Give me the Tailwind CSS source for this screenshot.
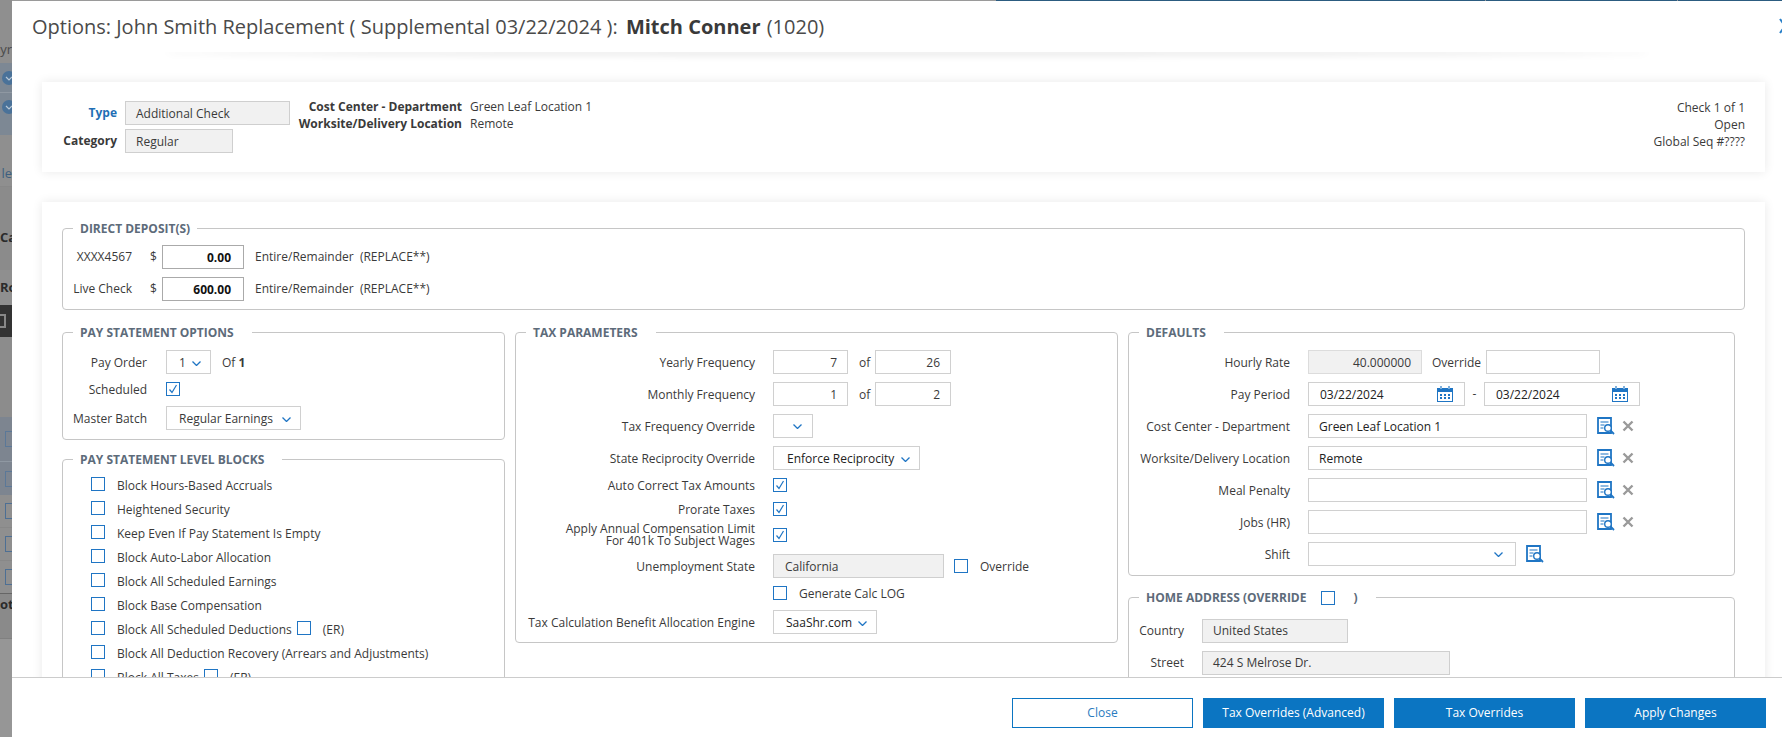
<!DOCTYPE html>
<html lang="en">
<head>
    <meta charset="UTF-8">
    <title>Options: Mitch Conner</title>
    <script src="https://cdn.jsdelivr.net/npm/@tailwindcss/browser@4"></script>
</head>
<body class="h-[737px] w-[1782px] overflow-hidden flex bg-[#8f8f8f] font-['Open_Sans','Noto_Sans',sans-serif] text-xs text-[#3a3a3a]">

<!-- Page behind the modal, only a sliver shows -->
<div class="w-[12px] h-full shrink-0 flex flex-col overflow-hidden text-[#2b2b2b]">
    <div class="h-[63px] shrink-0 bg-[#8f8f8f] flex flex-col justify-end items-end pb-[5px] text-[13px] leading-[18px] whitespace-nowrap"><span class="text-[#4a4a4a]">yr</span></div>
    <div class="h-[30px] shrink-0 bg-[#7d8894] border-b border-[#8f98a2] flex items-center"><span class="ml-[2px] w-[14px] h-[14px] shrink-0 rounded-full bg-[#4a7299] flex items-center justify-center"><svg class="w-2 h-2" viewBox="0 0 8 8"><path d="M1 3l3 3 3-3" stroke="#b9c8d6" stroke-width="1.2" fill="none"/></svg></span></div>
    <div class="h-[42px] shrink-0 bg-[#7d8894] flex items-start pt-[7px]"><span class="ml-[2px] w-[14px] h-[14px] shrink-0 rounded-full bg-[#4a7299] flex items-center justify-center"><svg class="w-2 h-2" viewBox="0 0 8 8"><path d="M1 3l3 3 3-3" stroke="#b9c8d6" stroke-width="1.2" fill="none"/></svg></span></div>
    <div class="h-[52px] shrink-0 bg-[#8f8f8f] border-b border-[#888] flex items-end justify-end pb-[4px] text-[13px] text-[#3d5f80]">le</div>
    <div class="h-[83px] shrink-0 bg-[#8b8b8b] flex items-end justify-start pb-[24px] text-[13px] font-bold overflow-hidden">Ca</div>
    <div class="h-[35px] shrink-0 bg-[#8f8f8f] flex items-center text-[13px] font-bold overflow-hidden">Ro</div>
    <div class="h-[32px] shrink-0 bg-[#333] flex items-center"><span class="-ml-[6px] w-[12px] h-[14px] shrink-0 border-2 border-[#888]"></span></div>
    <div class="h-[80px] shrink-0 bg-[#8c8c8c]"></div>
    <div class="h-[45px] shrink-0 bg-[#7d8590] border-b border-[#8f98a2] flex items-center"><span class="ml-[5px] w-[12px] h-[16px] shrink-0 border border-[#5b7898]"></span></div>
    <div class="h-[33px] shrink-0 bg-[#7d8590] flex items-center"><span class="ml-[5px] w-[12px] h-[16px] shrink-0 border border-[#5b7898]"></span></div>
    <div class="h-[33px] shrink-0 bg-[#8f8f8f] border-b border-[#888] flex items-center"><span class="ml-[5px] w-[12px] h-[16px] shrink-0 border border-[#4d6f94]"></span></div>
    <div class="h-[33px] shrink-0 bg-[#8f8f8f] border-b border-[#888] flex items-center"><span class="ml-[5px] w-[12px] h-[16px] shrink-0 border border-[#4d6f94]"></span></div>
    <div class="h-[33px] shrink-0 bg-[#8f8f8f] border-b border-[#666] flex items-center"><span class="ml-[5px] w-[12px] h-[16px] shrink-0 border border-[#4d6f94]"></span></div>
    <div class="h-[45px] shrink-0 bg-[#8a8a8a] border-b border-[#808080] text-[13px] font-bold leading-[18px] pt-[1px]">ot</div>
    <div class="flex-1 bg-[#969696]"></div>
</div>

<!-- Modal -->
<div class="relative flex-1 h-full flex flex-col overflow-hidden bg-white">
    <div class="h-px shrink-0 flex bg-[#2c5c80]">
        <div class="w-[984px] bg-[#9a9a9a]"></div>
        <div class="ml-[489px] w-px bg-[#999]"></div>
        <div class="ml-[191px] w-px bg-[#999]"></div>
    </div>

    <!-- Header -->
    <div class="relative h-[51px] shrink-0 flex items-center pl-[20px] pt-[2px] text-[20px] text-[#4a4a4a] whitespace-nowrap">
        <span>Options: John Smith Replacement ( Supplemental 03/22/2024 ):&nbsp;</span><span class="ml-[3px] font-bold text-[#3a3a3a]">Mitch Conner</span><span class="ml-[1px]">&nbsp;(1020)</span>
        <svg class="absolute right-[-9px] top-[17px] w-[12px] h-[16px]" viewBox="0 0 12 16"><path d="M1 1l10 14M11 1L1 15" stroke="#2a80c8" stroke-width="2" fill="none"/></svg>
    </div>

    <!-- Body -->
    <div class="relative flex-1 min-h-0 overflow-hidden pl-[30px] pr-[17px] pt-[30px]">
        <div class="absolute left-[150px] right-[130px] top-[-8px] h-[8px] rounded-[50%] shadow-[0_5px_7px_-2px_rgba(0,0,0,0.13)]"></div>

        <!-- Check summary -->
        <div class="h-[90px] flex justify-between bg-white shadow-[0_0_10px_rgba(0,0,0,0.09)] pt-[17px] pr-[20px]">
            <div class="flex">
                <div class="pt-[2px]">
                    <div class="flex items-center h-6 gap-[8px]">
                        <span class="w-[75px] text-right font-bold text-[#1f6fb5]">Type</span>
                        <div class="w-[165px] h-6 flex items-center pl-[10px] pt-[2px] bg-[#f1f1f1] border border-[#cfcfcf]">Additional Check</div>
                    </div>
                    <div class="flex items-center h-6 gap-[8px] mt-[4px]">
                        <span class="w-[75px] text-right font-bold">Category</span>
                        <div class="w-[108px] h-6 flex items-center pl-[10px] pt-[2px] bg-[#f1f1f1] border border-[#cfcfcf]">Regular</div>
                    </div>
                </div>
                <div class="ml-[-1px] -mt-[1px] leading-[17px]">
                    <div class="flex"><span class="w-[173px] text-right font-bold">Cost Center - Department</span><span class="ml-[8px]">Green Leaf Location 1</span></div>
                    <div class="flex"><span class="w-[173px] text-right font-bold">Worksite/Delivery Location</span><span class="ml-[8px]">Remote</span></div>
                </div>
            </div>
            <div class="text-right leading-[17px]">
                <div>Check 1 of 1</div>
                <div>Open</div>
                <div>Global Seq #????</div>
            </div>
        </div>

        <!-- Main card -->
        <div class="mt-[30px] h-[600px] bg-white shadow-[0_0_10px_rgba(0,0,0,0.09)] pt-[18px] pl-[20px] pr-[20px]">

            <fieldset class="border border-[#c6c6c6] rounded pt-[9px] pb-[8px] px-0">
                <legend class="ml-[10px] pl-[7px] pr-[7px] h-4 leading-[18px] font-bold text-[#5d6b7a]">DIRECT DEPOSIT(S)</legend>
                <div class="flex items-center h-6">
                    <span class="w-[69px] text-right">XXXX4567</span><span class="ml-[18px] w-[12px]">$</span>
                    <div class="w-[82px] h-6 flex items-center justify-end pr-[12px] pt-[2px] border border-[#aaa] font-bold text-[#111]">0.00</div>
                    <span class="ml-[11px]">Entire/Remainder &nbsp;(REPLACE**)</span>
                </div>
                <div class="flex items-center h-6 mt-2">
                    <span class="w-[69px] text-right">Live Check</span><span class="ml-[18px] w-[12px]">$</span>
                    <div class="w-[82px] h-6 flex items-center justify-end pr-[12px] pt-[2px] border border-[#aaa] font-bold text-[#111]">600.00</div>
                    <span class="ml-[11px]">Entire/Remainder &nbsp;(REPLACE**)</span>
                </div>
            </fieldset>

            <div class="grid grid-cols-[443px_603px_607px] gap-x-[10px] mt-[14px] items-start">

                <!-- Left column -->
                <div>
                    <fieldset class="border border-[#c6c6c6] rounded pt-[10px] pb-[9px] px-0">
                        <legend class="ml-[10px] pl-[7px] pr-[18px] h-4 leading-[18px] font-bold text-[#5d6b7a]">PAY STATEMENT OPTIONS</legend>
                        <div class="flex items-center h-6">
                            <span class="w-[84px] text-right pt-[2px]">Pay Order</span>
                            <div class="ml-[19px] w-[45px] h-6 flex items-center justify-between pl-[12px] pr-[9px] pt-[2px] border border-[#d0d0d0]">1
                                <svg class="w-[9px] h-[5px]" viewBox="0 0 9 5"><path d="M.5.5l4 4 4-4" stroke="#1f75c4" stroke-width="1.3" fill="none"/></svg>
                            </div>
                            <span class="ml-[11px] pt-[2px]">Of <b>1</b></span>
                        </div>
                        <div class="flex items-center h-6 mt-[3px]">
                            <span class="w-[84px] text-right pt-[2px]">Scheduled</span>
                            <span class="ml-[19px] w-[14px] h-[14px] border border-[#1f75c4] flex items-center justify-center"><svg class="w-[10px] h-[10px]" viewBox="0 0 10 10"><path d="M1.5 5.5l2.5 3L8.5 1" stroke="#1f75c4" stroke-width="1.2" fill="none"/></svg></span>
                        </div>
                        <div class="flex items-center h-6 mt-[5px]">
                            <span class="w-[84px] text-right pt-[2px]">Master Batch</span>
                            <div class="ml-[19px] w-[135px] h-6 flex items-center justify-between pl-[12px] pr-[9px] pt-[2px] border border-[#d0d0d0]">Regular Earnings
                                <svg class="w-[9px] h-[5px]" viewBox="0 0 9 5"><path d="M.5.5l4 4 4-4" stroke="#1f75c4" stroke-width="1.3" fill="none"/></svg>
                            </div>
                        </div>
                    </fieldset>

                    <fieldset class="border border-[#c6c6c6] rounded mt-[11px] pt-[10px] pl-[28px] h-[400px]">
                        <legend class="-ml-[18px] pl-[7px] pr-[18px] h-4 leading-[18px] font-bold text-[#5d6b7a]">PAY STATEMENT LEVEL BLOCKS</legend>
                        <div class="flex h-6"><span class="w-[14px] h-[14px] border border-[#1f75c4]"></span><span class="ml-[12px] leading-[17px]">Block Hours-Based Accruals</span></div>
                        <div class="flex h-6"><span class="w-[14px] h-[14px] border border-[#1f75c4]"></span><span class="ml-[12px] leading-[17px]">Heightened Security</span></div>
                        <div class="flex h-6"><span class="w-[14px] h-[14px] border border-[#1f75c4]"></span><span class="ml-[12px] leading-[17px]">Keep Even If Pay Statement Is Empty</span></div>
                        <div class="flex h-6"><span class="w-[14px] h-[14px] border border-[#1f75c4]"></span><span class="ml-[12px] leading-[17px]">Block Auto-Labor Allocation</span></div>
                        <div class="flex h-6"><span class="w-[14px] h-[14px] border border-[#1f75c4]"></span><span class="ml-[12px] leading-[17px]">Block All Scheduled Earnings</span></div>
                        <div class="flex h-6"><span class="w-[14px] h-[14px] border border-[#1f75c4]"></span><span class="ml-[12px] leading-[17px]">Block Base Compensation</span></div>
                        <div class="flex h-6"><span class="w-[14px] h-[14px] border border-[#1f75c4]"></span><span class="ml-[12px] leading-[17px]">Block All Scheduled Deductions</span><span class="ml-[5px] w-[14px] h-[14px] border border-[#1f75c4]"></span><span class="ml-[12px] leading-[17px]">(ER)</span></div>
                        <div class="flex h-6"><span class="w-[14px] h-[14px] border border-[#1f75c4]"></span><span class="ml-[12px] leading-[17px]">Block All Deduction Recovery (Arrears and Adjustments)</span></div>
                        <div class="flex h-6"><span class="w-[14px] h-[14px] border border-[#1f75c4]"></span><span class="ml-[12px] leading-[17px]">Block All Taxes</span><span class="ml-[5px] w-[14px] h-[14px] border border-[#1f75c4]"></span><span class="ml-[12px] leading-[17px]">(ER)</span></div>
                    </fieldset>
                </div>

                <!-- Tax parameters -->
                <fieldset class="border border-[#c6c6c6] rounded pt-[10px] pb-[8px] px-0">
                    <legend class="ml-[10px] pl-[7px] pr-[18px] h-4 leading-[18px] font-bold text-[#5d6b7a]">TAX PARAMETERS</legend>
                    <div class="flex items-center h-6">
                        <span class="w-[239px] text-right pt-[2px]">Yearly Frequency</span>
                        <div class="ml-[18px] w-[75px] h-6 flex items-center justify-end pr-[10px] pt-[2px] border border-[#d0d0d0]">7</div>
                        <span class="w-[27px] pl-[11px] pt-[2px]">of</span>
                        <div class="w-[76px] h-6 flex items-center justify-end pr-[10px] pt-[2px] border border-[#d0d0d0]">26</div>
                    </div>
                    <div class="flex items-center h-6 mt-2">
                        <span class="w-[239px] text-right pt-[2px]">Monthly Frequency</span>
                        <div class="ml-[18px] w-[75px] h-6 flex items-center justify-end pr-[10px] pt-[2px] border border-[#d0d0d0]">1</div>
                        <span class="w-[27px] pl-[11px] pt-[2px]">of</span>
                        <div class="w-[76px] h-6 flex items-center justify-end pr-[10px] pt-[2px] border border-[#d0d0d0]">2</div>
                    </div>
                    <div class="flex items-center h-6 mt-2">
                        <span class="w-[239px] text-right pt-[2px]">Tax Frequency Override</span>
                        <div class="ml-[18px] w-[40px] h-6 flex items-center justify-end pr-[10px] border border-[#d0d0d0]">
                            <svg class="w-[9px] h-[5px]" viewBox="0 0 9 5"><path d="M.5.5l4 4 4-4" stroke="#1f75c4" stroke-width="1.3" fill="none"/></svg>
                        </div>
                    </div>
                    <div class="flex items-center h-6 mt-2">
                        <span class="w-[239px] text-right pt-[2px]">State Reciprocity Override</span>
                        <div class="ml-[18px] w-[147px] h-6 flex items-center justify-between pl-[13px] pr-[9px] pt-[2px] border border-[#d0d0d0] text-[#222]">Enforce Reciprocity
                            <svg class="w-[9px] h-[5px]" viewBox="0 0 9 5"><path d="M.5.5l4 4 4-4" stroke="#1f75c4" stroke-width="1.3" fill="none"/></svg>
                        </div>
                    </div>
                    <div class="flex items-center h-6 mt-[3px]">
                        <span class="w-[239px] text-right pt-[2px]">Auto Correct Tax Amounts</span>
                        <span class="ml-[18px] w-[14px] h-[14px] border border-[#1f75c4] flex items-center justify-center"><svg class="w-[10px] h-[10px]" viewBox="0 0 10 10"><path d="M1.5 5.5l2.5 3L8.5 1" stroke="#1f75c4" stroke-width="1.2" fill="none"/></svg></span>
                    </div>
                    <div class="flex items-center h-6">
                        <span class="w-[239px] text-right pt-[2px]">Prorate Taxes</span>
                        <span class="ml-[18px] w-[14px] h-[14px] border border-[#1f75c4] flex items-center justify-center"><svg class="w-[10px] h-[10px]" viewBox="0 0 10 10"><path d="M1.5 5.5l2.5 3L8.5 1" stroke="#1f75c4" stroke-width="1.2" fill="none"/></svg></span>
                    </div>
                    <div class="flex items-center h-6 mt-[2px]">
                        <span class="w-[239px] text-right leading-[12px]">Apply Annual Compensation Limit<br>For 401k To Subject Wages</span>
                        <span class="ml-[18px] w-[14px] h-[14px] border border-[#1f75c4] flex items-center justify-center"><svg class="w-[10px] h-[10px]" viewBox="0 0 10 10"><path d="M1.5 5.5l2.5 3L8.5 1" stroke="#1f75c4" stroke-width="1.2" fill="none"/></svg></span>
                    </div>
                    <div class="flex items-center h-6 mt-[7px]">
                        <span class="w-[239px] text-right pt-[2px]">Unemployment State</span>
                        <div class="ml-[18px] w-[171px] h-6 flex items-center pl-[11px] pt-[2px] bg-[#f1f1f1] border border-[#cfcfcf]">California</div>
                        <span class="ml-[10px] w-[14px] h-[14px] border border-[#1f75c4]"></span>
                        <span class="ml-[12px] pt-[2px]">Override</span>
                    </div>
                    <div class="flex items-center h-6 mt-[3px] pl-[257px]">
                        <span class="w-[14px] h-[14px] border border-[#1f75c4]"></span>
                        <span class="ml-[12px] pt-[2px]">Generate Calc LOG</span>
                    </div>
                    <div class="flex items-center h-6 mt-[5px]">
                        <span class="w-[239px] text-right pt-[2px]">Tax Calculation Benefit Allocation Engine</span>
                        <div class="ml-[18px] w-[104px] h-6 flex items-center justify-between pl-[12px] pr-[9px] pt-[2px] border border-[#d0d0d0] text-[#222]">SaaShr.com
                            <svg class="w-[9px] h-[5px]" viewBox="0 0 9 5"><path d="M.5.5l4 4 4-4" stroke="#1f75c4" stroke-width="1.3" fill="none"/></svg>
                        </div>
                    </div>
                </fieldset>

                <!-- Right column -->
                <div>
                    <fieldset class="border border-[#c6c6c6] rounded pt-[10px] pb-[9px] px-0">
                        <legend class="ml-[10px] pl-[7px] pr-[18px] h-4 leading-[18px] font-bold text-[#5d6b7a]">DEFAULTS</legend>
                        <div class="flex items-center h-6">
                            <span class="w-[161px] text-right pt-[2px]">Hourly Rate</span>
                            <div class="ml-[18px] w-[114px] h-6 flex items-center justify-end pr-[10px] pt-[2px] bg-[#f1f1f1] border border-[#dcdcdc]">40.000000</div>
                            <span class="ml-[10px] w-[54px] pt-[2px]">Override</span>
                            <div class="w-[114px] h-6 border border-[#d0d0d0]"></div>
                        </div>
                        <div class="flex items-center h-6 mt-2">
                            <span class="w-[161px] text-right pt-[2px]">Pay Period</span>
                            <div class="ml-[18px] w-[157px] h-6 flex items-center justify-between pl-[11px] pr-[11px] border border-[#d0d0d0] text-[#222]"><span class="pt-[2px]">03/22/2024</span>
                                <svg class="w-4 h-4" viewBox="0 0 16 16"><path d="M0 2h16v14H0z" fill="#1f75c4"/><path d="M1 6h14v9H1z" fill="#fff"/><path d="M3 0h2v3H3zM11 0h2v3h-2z" fill="#7fb0dc"/><path d="M3 8h2v2H3zM7 8h2v2H7zM11 8h2v2h-2zM3 11h2v2H3zM7 11h2v2H7zM11 11h2v2h-2z" fill="#1f75c4"/></svg>
                            </div>
                            <span class="w-[19px] text-center">-</span>
                            <div class="w-[156px] h-6 flex items-center justify-between pl-[11px] pr-[11px] border border-[#d0d0d0] text-[#222]"><span class="pt-[2px]">03/22/2024</span>
                                <svg class="w-4 h-4" viewBox="0 0 16 16"><path d="M0 2h16v14H0z" fill="#1f75c4"/><path d="M1 6h14v9H1z" fill="#fff"/><path d="M3 0h2v3H3zM11 0h2v3h-2z" fill="#7fb0dc"/><path d="M3 8h2v2H3zM7 8h2v2H7zM11 8h2v2h-2zM3 11h2v2H3zM7 11h2v2H7zM11 11h2v2h-2z" fill="#1f75c4"/></svg>
                            </div>
                        </div>
                        <div class="flex items-center h-6 mt-2">
                            <span class="w-[161px] text-right pt-[2px]">Cost Center - Department</span>
                            <div class="ml-[18px] w-[279px] h-6 flex items-center pl-[10px] pt-[2px] border border-[#d0d0d0] text-[#222]">Green Leaf Location 1</div>
                            <svg class="ml-[10px] w-[18px] h-[18px]" viewBox="0 0 18 18"><path d="M1 1h13v15H1z" fill="none" stroke="#1f75c4" stroke-width="1.8"/><path d="M3.5 5h8M3.5 8h4M3.5 11h3" stroke="#1f75c4" stroke-width="1.2"/><circle cx="11" cy="11" r="3.3" fill="#fff" stroke="#1f75c4" stroke-width="1.4"/><path d="M13.5 13.5L17 17" stroke="#1f75c4" stroke-width="1.8"/></svg>
                            <svg class="ml-[7px] w-3 h-3" viewBox="0 0 12 12"><path d="M1.5 1.5l9 9M10.5 1.5l-9 9" stroke="#9a9a9a" stroke-width="2.4"/></svg>
                        </div>
                        <div class="flex items-center h-6 mt-2">
                            <span class="w-[161px] text-right pt-[2px]">Worksite/Delivery Location</span>
                            <div class="ml-[18px] w-[279px] h-6 flex items-center pl-[10px] pt-[2px] border border-[#d0d0d0] text-[#222]">Remote</div>
                            <svg class="ml-[10px] w-[18px] h-[18px]" viewBox="0 0 18 18"><path d="M1 1h13v15H1z" fill="none" stroke="#1f75c4" stroke-width="1.8"/><path d="M3.5 5h8M3.5 8h4M3.5 11h3" stroke="#1f75c4" stroke-width="1.2"/><circle cx="11" cy="11" r="3.3" fill="#fff" stroke="#1f75c4" stroke-width="1.4"/><path d="M13.5 13.5L17 17" stroke="#1f75c4" stroke-width="1.8"/></svg>
                            <svg class="ml-[7px] w-3 h-3" viewBox="0 0 12 12"><path d="M1.5 1.5l9 9M10.5 1.5l-9 9" stroke="#9a9a9a" stroke-width="2.4"/></svg>
                        </div>
                        <div class="flex items-center h-6 mt-2">
                            <span class="w-[161px] text-right pt-[2px]">Meal Penalty</span>
                            <div class="ml-[18px] w-[279px] h-6 border border-[#d0d0d0]"></div>
                            <svg class="ml-[10px] w-[18px] h-[18px]" viewBox="0 0 18 18"><path d="M1 1h13v15H1z" fill="none" stroke="#1f75c4" stroke-width="1.8"/><path d="M3.5 5h8M3.5 8h4M3.5 11h3" stroke="#1f75c4" stroke-width="1.2"/><circle cx="11" cy="11" r="3.3" fill="#fff" stroke="#1f75c4" stroke-width="1.4"/><path d="M13.5 13.5L17 17" stroke="#1f75c4" stroke-width="1.8"/></svg>
                            <svg class="ml-[7px] w-3 h-3" viewBox="0 0 12 12"><path d="M1.5 1.5l9 9M10.5 1.5l-9 9" stroke="#9a9a9a" stroke-width="2.4"/></svg>
                        </div>
                        <div class="flex items-center h-6 mt-2">
                            <span class="w-[161px] text-right pt-[2px]">Jobs (HR)</span>
                            <div class="ml-[18px] w-[279px] h-6 border border-[#d0d0d0]"></div>
                            <svg class="ml-[10px] w-[18px] h-[18px]" viewBox="0 0 18 18"><path d="M1 1h13v15H1z" fill="none" stroke="#1f75c4" stroke-width="1.8"/><path d="M3.5 5h8M3.5 8h4M3.5 11h3" stroke="#1f75c4" stroke-width="1.2"/><circle cx="11" cy="11" r="3.3" fill="#fff" stroke="#1f75c4" stroke-width="1.4"/><path d="M13.5 13.5L17 17" stroke="#1f75c4" stroke-width="1.8"/></svg>
                            <svg class="ml-[7px] w-3 h-3" viewBox="0 0 12 12"><path d="M1.5 1.5l9 9M10.5 1.5l-9 9" stroke="#9a9a9a" stroke-width="2.4"/></svg>
                        </div>
                        <div class="flex items-center h-6 mt-2">
                            <span class="w-[161px] text-right pt-[2px]">Shift</span>
                            <div class="ml-[18px] w-[208px] h-6 flex items-center justify-end pr-[12px] border border-[#d0d0d0]">
                                <svg class="w-[9px] h-[5px]" viewBox="0 0 9 5"><path d="M.5.5l4 4 4-4" stroke="#1f75c4" stroke-width="1.3" fill="none"/></svg>
                            </div>
                            <svg class="ml-[10px] w-[18px] h-[18px]" viewBox="0 0 18 18"><path d="M1 1h13v15H1z" fill="none" stroke="#1f75c4" stroke-width="1.8"/><path d="M3.5 5h8M3.5 8h4M3.5 11h3" stroke="#1f75c4" stroke-width="1.2"/><circle cx="11" cy="11" r="3.3" fill="#fff" stroke="#1f75c4" stroke-width="1.4"/><path d="M13.5 13.5L17 17" stroke="#1f75c4" stroke-width="1.8"/></svg>
                        </div>
                    </fieldset>

                    <fieldset class="border border-[#c6c6c6] rounded mt-[13px] pt-[14px] h-[300px] px-0">
                        <legend class="ml-[10px] pl-[7px] pr-[18px] h-4 flex items-center pt-[2px] font-bold text-[#5d6b7a]">HOME ADDRESS (OVERRIDE<span class="ml-[15px] w-[14px] h-[14px] border border-[#1f75c4]"></span><span class="ml-[18px]">)</span></legend>
                        <div class="flex items-center h-6">
                            <span class="w-[55px] text-right">Country</span>
                            <div class="ml-[18px] w-[146px] h-6 flex items-center pl-[10px] bg-[#f1f1f1] border border-[#cfcfcf]">United States</div>
                        </div>
                        <div class="flex items-center h-6 mt-2">
                            <span class="w-[55px] text-right">Street</span>
                            <div class="ml-[18px] w-[248px] h-6 flex items-center pl-[10px] bg-[#f1f1f1] border border-[#cfcfcf]">424 S Melrose Dr.</div>
                        </div>
                    </fieldset>
                </div>
            </div>
        </div>
    </div>

    <!-- Footer -->
    <div class="h-[60px] shrink-0 bg-white border-t border-[#cccccc] flex justify-end gap-[10px] pt-[20px] pr-[16px]">
        <button class="w-[181px] h-[30px] bg-white border border-[#0b75c2] text-[#2a7cc0]">Close</button>
        <button class="w-[181px] h-[30px] bg-[#0b75c2] text-white">Tax Overrides (Advanced)</button>
        <button class="w-[181px] h-[30px] bg-[#0b75c2] text-white">Tax Overrides</button>
        <button class="w-[181px] h-[30px] bg-[#0b75c2] text-white">Apply Changes</button>
    </div>
</div>
</body>
</html>
